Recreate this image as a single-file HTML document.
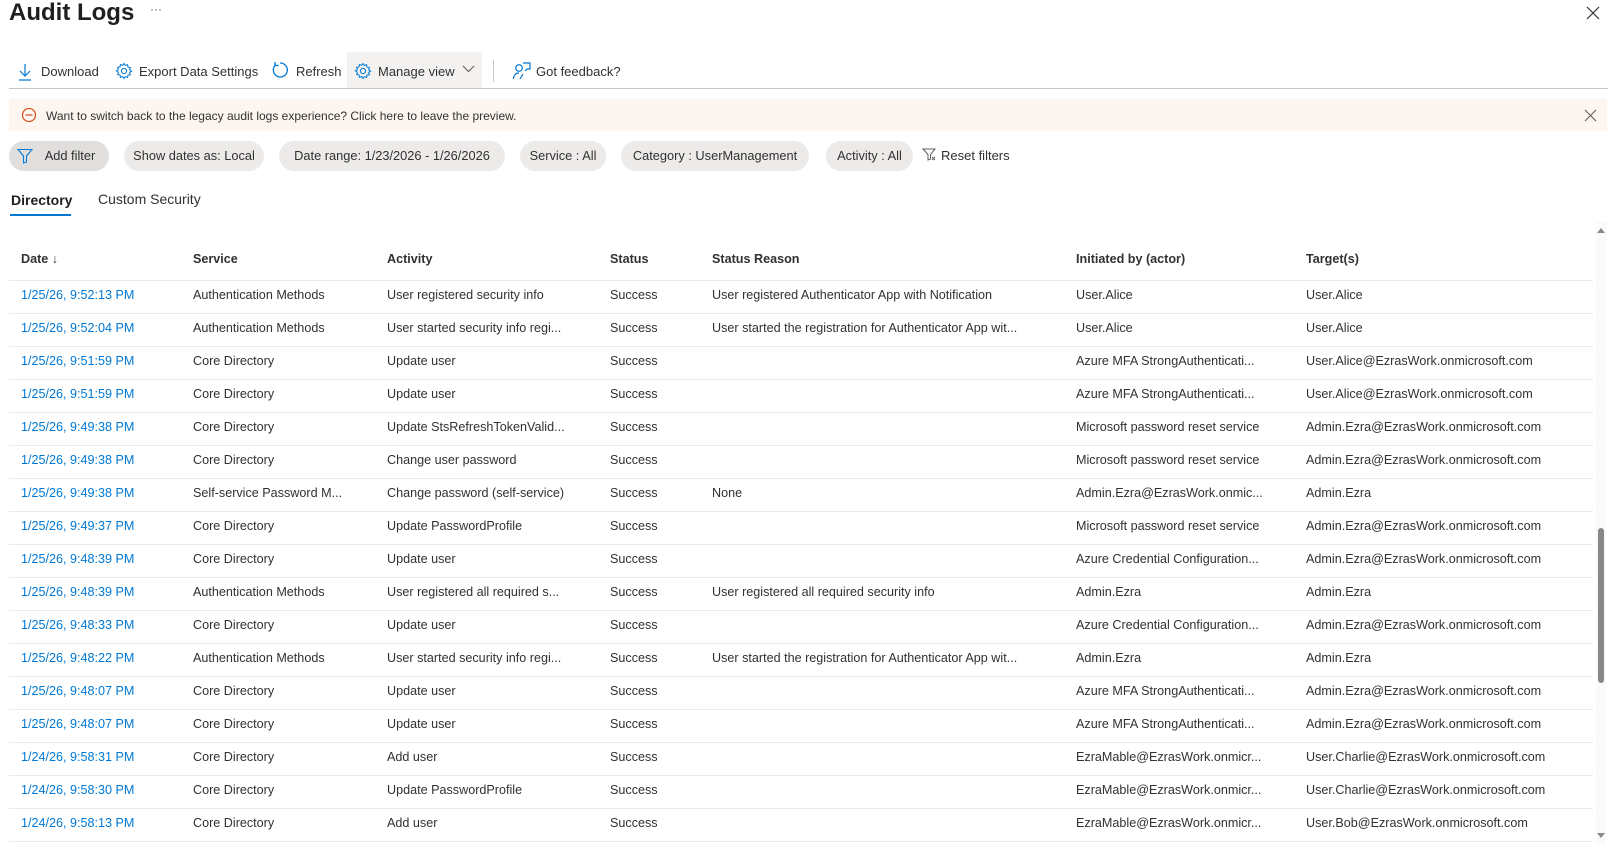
<!DOCTYPE html>
<html><head><meta charset="utf-8"><style>
*{margin:0;padding:0;box-sizing:border-box}
body{width:1608px;height:849px;overflow:hidden;background:#fff;font-family:"Segoe UI","Liberation Sans",sans-serif;color:#323130;position:relative;font-size:13px}
.a{position:absolute;white-space:nowrap}
.t{font-size:13px;line-height:16px}
.pill{position:absolute;top:141px;height:30px;border-radius:15px;background:#edebe9;font-size:12.8px;line-height:30px;text-align:center;color:#323130}
.row{position:absolute;left:9px;width:1584px;height:33px;border-bottom:1px solid #edebe9}
.row span{position:absolute;top:6px;font-size:12.6px;line-height:16px;white-space:nowrap}
.d{color:#0078d4}
svg{position:absolute}
</style></head><body>
<div class="a" style="left:9px;top:-3px;font-size:24px;font-weight:600;color:#201f1e;line-height:32px">Audit Logs</div>
<div class="a" style="left:150px;top:2px;font-size:12px;color:#605e5c">···</div>
<svg style="left:1585px;top:5px" width="16" height="16" viewBox="0 0 16 16"><path d="M2 2L14 14M14 2L2 14" stroke="#323130" stroke-width="1.2"/></svg>

<div class="a" style="left:347px;top:52px;width:135px;height:36px;background:#f3f2f1"></div>
<svg style="left:17px;top:63px" width="16" height="18" viewBox="0 0 16 18"><path d="M8 1V13M3 8L8 13L13 8M2 17H14" stroke="#0078d4" stroke-width="1.2" fill="none"/></svg>
<div class="a t" style="left:41px;top:64px">Download</div>
<svg style="left:115px;top:62px" width="18" height="18" viewBox="0 0 18 18"><circle cx="9" cy="9" r="2.6" stroke="#0078d4" fill="none"/><path d="M9 1.5l1.3 2 2.3-.8.4 2.4 2.4.4-.8 2.3 2 1.3-2 1.3.8 2.3-2.4.4-.4 2.4-2.3-.8L9 16.5l-1.3-2-2.3.8-.4-2.4-2.4-.4.8-2.3-2-1.3 2-1.3-.8-2.3 2.4-.4.4-2.4 2.3.8z" stroke="#0078d4" fill="none" stroke-width="1"/></svg>
<div class="a t" style="left:139px;top:64px">Export Data Settings</div>
<svg style="left:271px;top:61px" width="18" height="18" viewBox="0 0 18 18"><path d="M5 3.5A7 7 0 1 0 9 2" stroke="#0078d4" stroke-width="1.3" fill="none"/><path d="M4 1V4.5H7.5" stroke="#0078d4" stroke-width="1.3" fill="none"/></svg>
<div class="a t" style="left:296px;top:64px">Refresh</div>
<svg style="left:354px;top:62px" width="18" height="18" viewBox="0 0 18 18"><circle cx="9" cy="9" r="2.6" stroke="#0078d4" fill="none"/><path d="M9 1.5l1.3 2 2.3-.8.4 2.4 2.4.4-.8 2.3 2 1.3-2 1.3.8 2.3-2.4.4-.4 2.4-2.3-.8L9 16.5l-1.3-2-2.3.8-.4-2.4-2.4-.4.8-2.3-2-1.3 2-1.3-.8-2.3 2.4-.4.4-2.4 2.3.8z" stroke="#0078d4" fill="none" stroke-width="1"/></svg>
<div class="a t" style="left:378px;top:64px">Manage view</div>
<svg style="left:462px;top:65px" width="13" height="8" viewBox="0 0 13 8"><path d="M1 1L6.5 6.5L12 1" stroke="#605e5c" stroke-width="1.1" fill="none"/></svg>
<div class="a" style="left:493px;top:60px;width:1px;height:22px;background:#c8c6c4"></div>
<svg style="left:512px;top:61px" width="20" height="20" viewBox="0 0 20 20"><circle cx="7" cy="7" r="3.3" stroke="#0078d4" fill="none" stroke-width="1.2"/><path d="M1.5 18c0-4 2.5-6 5.5-6M11 2h7v6h-3l-2 2" stroke="#0078d4" fill="none" stroke-width="1.2"/><path d="M8 18l3-5" stroke="#0078d4" stroke-width="1.2"/></svg>
<div class="a t" style="left:536px;top:64px">Got feedback?</div>
<div class="a" style="left:9px;top:88px;width:1599px;height:1px;background:#c8c6c4"></div>

<div class="a" style="left:9px;top:99px;width:1598px;height:32px;background:#fdf6f0"></div>
<svg style="left:21px;top:107px" width="16" height="16" viewBox="0 0 16 16"><circle cx="8" cy="8" r="6.5" stroke="#d83b01" fill="none" stroke-width="1.1"/><path d="M4.5 8H11.5" stroke="#d83b01" stroke-width="1.1"/></svg>
<div class="a" style="left:46px;top:108px;font-size:12px;line-height:16px">Want to switch back to the legacy audit logs experience? Click here to leave the preview.</div>
<svg style="left:1584px;top:109px" width="13" height="13" viewBox="0 0 13 13"><path d="M1 1L12 12M12 1L1 12" stroke="#605e5c" stroke-width="1.1"/></svg>

<div class="pill" style="left:9px;width:100px;background:#e1dfdd;padding-left:22px">Add filter</div>
<svg style="left:17px;top:148px" width="16" height="16" viewBox="0 0 16 16"><path d="M1 1.5H15L9.5 8V14L6.5 15V8Z" stroke="#0078d4" fill="none" stroke-width="1.1"/></svg>
<div class="pill" style="left:124px;width:140px">Show dates as: Local</div>
<div class="pill" style="left:279px;width:226px">Date range: 1/23/2026 - 1/26/2026</div>
<div class="pill" style="left:520px;width:86px">Service : All</div>
<div class="pill" style="left:621px;width:188px">Category : UserManagement</div>
<div class="pill" style="left:826px;width:87px">Activity : All</div>
<svg style="left:922px;top:148px" width="15" height="14" viewBox="0 0 15 14"><path d="M1 1H13L8.5 6.5V11L6 12V6.5Z" stroke="#605e5c" fill="none"/><path d="M10 9L13 12M13 9L10 12" stroke="#605e5c"/></svg>
<div class="a t" style="left:941px;top:148px">Reset filters</div>

<div class="a" style="left:11px;top:192px;font-size:14px;font-weight:600;color:#201f1e">Directory</div>
<div class="a" style="left:10px;top:214px;width:61px;height:2px;background:#0078d4"></div>
<div class="a" style="left:98px;top:191px;font-size:14px">Custom Security</div>

<div class="a" style="left:1596px;top:222px;width:10px;height:622px;background:#fafafa"></div>
<svg style="left:1596px;top:226px" width="10" height="8"><path d="M1 7L5 2L9 7Z" fill="#8a8886"/></svg>
<svg style="left:1596px;top:832px" width="10" height="8"><path d="M1 1L5 6L9 1Z" fill="#8a8886"/></svg>
<div class="a" style="left:1598px;top:528px;width:6px;height:155px;border-radius:3px;background:#8a8886"></div>

<div class="row" style="top:246px;height:35px">
<span style="left:12px;top:5px;font-weight:600">Date ↓</span><span style="left:184px;top:5px;font-weight:600">Service</span><span style="left:378px;top:5px;font-weight:600">Activity</span><span style="left:601px;top:5px;font-weight:600">Status</span><span style="left:703px;top:5px;font-weight:600">Status Reason</span><span style="left:1067px;top:5px;font-weight:600">Initiated by (actor)</span><span style="left:1297px;top:5px;font-weight:600">Target(s)</span>
</div>

<div id="rows"></div>
<script>
const R=[
["1/25/26, 9:52:13 PM","Authentication Methods","User registered security info","User registered Authenticator App with Notification","User.Alice","User.Alice"],
["1/25/26, 9:52:04 PM","Authentication Methods","User started security info regi...","User started the registration for Authenticator App wit...","User.Alice","User.Alice"],
["1/25/26, 9:51:59 PM","Core Directory","Update user","","Azure MFA StrongAuthenticati...","User.Alice@EzrasWork.onmicrosoft.com"],
["1/25/26, 9:51:59 PM","Core Directory","Update user","","Azure MFA StrongAuthenticati...","User.Alice@EzrasWork.onmicrosoft.com"],
["1/25/26, 9:49:38 PM","Core Directory","Update StsRefreshTokenValid...","","Microsoft password reset service","Admin.Ezra@EzrasWork.onmicrosoft.com"],
["1/25/26, 9:49:38 PM","Core Directory","Change user password","","Microsoft password reset service","Admin.Ezra@EzrasWork.onmicrosoft.com"],
["1/25/26, 9:49:38 PM","Self-service Password M...","Change password (self-service)","None","Admin.Ezra@EzrasWork.onmic...","Admin.Ezra"],
["1/25/26, 9:49:37 PM","Core Directory","Update PasswordProfile","","Microsoft password reset service","Admin.Ezra@EzrasWork.onmicrosoft.com"],
["1/25/26, 9:48:39 PM","Core Directory","Update user","","Azure Credential Configuration...","Admin.Ezra@EzrasWork.onmicrosoft.com"],
["1/25/26, 9:48:39 PM","Authentication Methods","User registered all required s...","User registered all required security info","Admin.Ezra","Admin.Ezra"],
["1/25/26, 9:48:33 PM","Core Directory","Update user","","Azure Credential Configuration...","Admin.Ezra@EzrasWork.onmicrosoft.com"],
["1/25/26, 9:48:22 PM","Authentication Methods","User started security info regi...","User started the registration for Authenticator App wit...","Admin.Ezra","Admin.Ezra"],
["1/25/26, 9:48:07 PM","Core Directory","Update user","","Azure MFA StrongAuthenticati...","Admin.Ezra@EzrasWork.onmicrosoft.com"],
["1/25/26, 9:48:07 PM","Core Directory","Update user","","Azure MFA StrongAuthenticati...","Admin.Ezra@EzrasWork.onmicrosoft.com"],
["1/24/26, 9:58:31 PM","Core Directory","Add user","","EzraMable@EzrasWork.onmicr...","User.Charlie@EzrasWork.onmicrosoft.com"],
["1/24/26, 9:58:30 PM","Core Directory","Update PasswordProfile","","EzraMable@EzrasWork.onmicr...","User.Charlie@EzrasWork.onmicrosoft.com"],
["1/24/26, 9:58:13 PM","Core Directory","Add user","","EzraMable@EzrasWork.onmicr...","User.Bob@EzrasWork.onmicrosoft.com"]];
let h="";R.forEach((r,i)=>{h+=`<div class="row" style="top:${281+i*33}px"><span class="d" style="left:12px">${r[0]}</span><span style="left:184px">${r[1]}</span><span style="left:378px">${r[2]}</span><span style="left:601px">Success</span><span style="left:703px">${r[3]}</span><span style="left:1067px">${r[4]}</span><span style="left:1297px">${r[5]}</span></div>`});
document.getElementById("rows").innerHTML=h;
</script>
</body></html>
